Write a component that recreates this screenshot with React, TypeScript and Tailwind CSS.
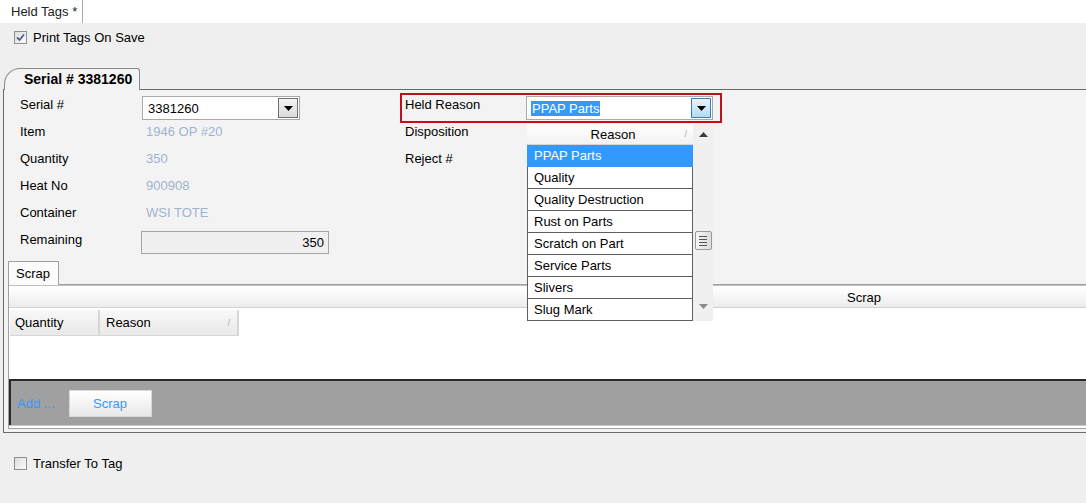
import React from "react";

const Check = ({ checked }: { checked?: boolean }) => (
  <div className="w-[13px] h-[13px] border border-[#8e8f8f] bg-gradient-to-br from-[#dcdcdc] to-[#fbfbfb] flex items-center justify-center shrink-0">
    {checked && (
      <svg width="9" height="9" viewBox="0 0 9 9">
        <path d="M1 4.5 L3.5 7 L8 1.5" fill="none" stroke="#4a5f97" strokeWidth="1.8" />
      </svg>
    )}
  </div>
);

const Arrow = () => (
  <svg width="9" height="5" viewBox="0 0 9 5">
    <path d="M0 0 H9 L4.5 5 Z" fill="#000" />
  </svg>
);

const LeftRow = ({ label, children }: { label: string; children?: React.ReactNode }) => (
  <div className="flex h-[27px] items-center">
    <div className="w-[122px] shrink-0">{label}</div>
    {children}
  </div>
);

const Value = ({ children }: { children: React.ReactNode }) => (
  <div className="text-[#9fb4cf] pl-[4px]">{children}</div>
);

const reasons = [
  "PPAP Parts",
  "Quality",
  "Quality Destruction",
  "Rust on Parts",
  "Scratch on Part",
  "Service Parts",
  "Slivers",
  "Slug Mark",
];

const ReasonList = () => (
  <div className="absolute top-[27px] left-0 w-[186px] h-[197px] flex z-20">
    <div className="w-[166px] flex flex-col bg-white">
      <div className="h-[21px] flex items-center justify-center relative bg-gradient-to-b from-white to-[#f2f2f2] border-b border-[#d5d5d5]">
        <span className="pl-[6px]">Reason</span>
        <span className="absolute right-[6px] top-[3px] text-[9px] text-[#aaa]">/</span>
      </div>
      {reasons.map((r, i) => (
        <div
          key={r}
          className={
            i === 0
              ? "h-[22px] flex items-center pl-[7px] bg-[#3399ff] text-white border-b border-[#3399ff]"
              : "h-[22px] flex items-center pl-[6px] border-x border-b border-[#5f5f5f] bg-white"
          }
        >
          {r}
        </div>
      ))}
    </div>
    <div className="w-[20px] bg-[#f0f0f0] flex flex-col items-center">
      <svg width="9" height="5" viewBox="0 0 9 5" className="mt-[8px]">
        <path d="M4.5 0 L9 5 H0 Z" fill="#3c3c3c" />
      </svg>
      <div className="mt-[94px] w-[17px] h-[19px] border border-[#9a9a9a] rounded-[2px] bg-gradient-to-r from-[#f4f4f4] to-[#dedede] flex flex-col items-center justify-center gap-[2px]">
        <div className="w-[8px] h-px bg-[#555]" />
        <div className="w-[8px] h-px bg-[#555]" />
        <div className="w-[8px] h-px bg-[#555]" />
        <div className="w-[8px] h-px bg-[#555]" />
      </div>
      <svg width="9" height="5" viewBox="0 0 9 5" className="mt-[54px]">
        <path d="M0 0 H9 L4.5 5 Z" fill="#8a8a8a" />
      </svg>
    </div>
  </div>
);

export default function App() {
  return (
    <div className="w-[1086px] h-[503px] overflow-hidden bg-[#efefef] font-['Liberation_Sans',Arial,sans-serif] text-[13px] leading-[15px] text-black">
      {/* document tab strip */}
      <div className="h-[23px] bg-white flex pl-[4px]">
        <div className="h-[23px] pl-[7px] pr-[5px] border-r border-[#a9a9a9] flex items-center text-[#222]">
          Held Tags *
        </div>
      </div>

      <div className="flex items-center h-[14px] mt-[7px] pl-[14px] gap-[6px]">
        <Check checked />
        <span>Print Tags On Save</span>
      </div>

      {/* serial tab */}
      <div className="mt-[24px] pl-[4px] flex">
        <div className="relative z-10 -mb-px h-[22px] w-[136px] border-t border-r border-l border-[#8a8a8a] rounded-tl-[16px] rounded-tr-[3px] bg-[#f3f3f3] flex items-center pl-[19px] font-bold text-[14px]">
          Serial # 3381260
        </div>
      </div>

      <div className="ml-[3px] h-[344px] border-t border-l border-b border-[#6a6a6a] bg-[#f3f3f3] flex flex-col">
        <div className="pt-[1px] flex h-[163px]">
          <div className="w-[396px] pl-[16px] shrink-0 flex flex-col">
            <LeftRow label="Serial #">
              <div className="self-start mt-[5px] w-[158px] h-[24px] border border-[#a9a9a9] bg-white flex items-center justify-between pl-[5px] pr-[1px]">
                <span>3381260</span>
                <div className="w-[20px] h-[20px] border border-[#707070] bg-gradient-to-b from-[#f4f4f4] to-[#dcdcdc] flex items-center justify-center">
                  <Arrow />
                </div>
              </div>
            </LeftRow>
            <LeftRow label="Item">
              <Value>1946 OP #20</Value>
            </LeftRow>
            <LeftRow label="Quantity">
              <Value>350</Value>
            </LeftRow>
            <LeftRow label="Heat No">
              <Value>900908</Value>
            </LeftRow>
            <LeftRow label="Container">
              <Value>WSI TOTE</Value>
            </LeftRow>
            <div className="flex h-[27px] items-center">
              <div className="w-[121px] shrink-0">Remaining</div>
              <div className="self-start mt-[5px] w-[188px] h-[23px] border border-[#a5a5a5] bg-[#f0f0f0] flex items-center justify-end pr-[4px]">
                350
              </div>
            </div>
          </div>

          <div className="flex flex-col">
            <div className="h-[27px]">
              <div className="mt-[2px] h-[30px] w-[322px] border-2 border-[#c0111b] flex items-start relative z-20">
                <div className="w-[124px] pl-[3px] pt-[2px] shrink-0">Held Reason</div>
                <div className="relative mt-[1px] w-[187px] h-[24px] border border-[#a9a9a9] bg-white flex items-center justify-between pl-[4px] pr-[1px]">
                  <span className="bg-[#3399ff] text-white px-px">PPAP Parts</span>
                  <div className="w-[20px] h-[20px] border border-[#3c7fb1] bg-gradient-to-b from-[#e5f4fc] to-[#b5dcf3] flex items-center justify-center">
                    <Arrow />
                  </div>
                  <ReasonList />
                </div>
              </div>
            </div>
            <div className="h-[27px] flex items-center pl-[5px]">Disposition</div>
            <div className="h-[27px] flex items-center pl-[5px]">Reject #</div>
          </div>
        </div>

        {/* scrap section */}
        <div className="mt-[8px] ml-[4px] flex flex-col">
          <div className="flex">
            <div className="relative z-10 -mb-px h-[24px] w-[51px] border-t border-x border-[#a0a0a0] bg-[#fbfbfb] flex items-center pl-[7px]">
              Scrap
            </div>
          </div>
          <div className="h-[145px] border-t border-l border-b border-[#a0a0a0] bg-white flex flex-col">
            <div className="h-[3px] border-t border-[#b9c0c8]" />
            <div className="h-[20px] flex border-b border-[#d2d2d2] bg-gradient-to-b from-white to-[#ececec]">
              <div className="w-[633px] shrink-0" />
              <div className="flex-1 flex items-center justify-center">Scrap</div>
            </div>
            <div className="h-[2px]" />
            <div className="h-[26px] flex pl-[1px]">
              <div className="w-[90px] h-full flex items-center pl-[5px] bg-gradient-to-b from-[#f8f8f8] to-[#e9e9e9] border-r-2 border-b border-[#d6d6d6]">
                Quantity
              </div>
              <div className="w-[139px] h-full flex items-center pl-[6px] relative bg-gradient-to-b from-[#f8f8f8] to-[#e9e9e9] border-r-2 border-b border-[#d6d6d6]">
                Reason
                <span className="absolute right-[7px] top-[6px] text-[9px] text-[#aaa]">/</span>
              </div>
            </div>
            <div className="flex-1" />
            <div className="h-[46px] border-t-2 border-l-2 border-[#2a2a2a] bg-[#a0a0a0] flex items-center pl-[6px]">
              <span className="text-[#3399ff]">Add ...</span>
              <div className="ml-[14px] w-[83px] h-[27px] border border-[#d8d8d8] bg-gradient-to-b from-white to-[#e8e8e8] flex items-center justify-center text-[#3399ff]">
                Scrap
              </div>
            </div>
            <div className="h-[3px] border-t border-[#c2c9d1] bg-white" />
          </div>
        </div>
      </div>

      <div className="flex items-center h-[14px] mt-[23px] pl-[14px] gap-[6px]">
        <Check />
        <span>Transfer To Tag</span>
      </div>
    </div>
  );
}
